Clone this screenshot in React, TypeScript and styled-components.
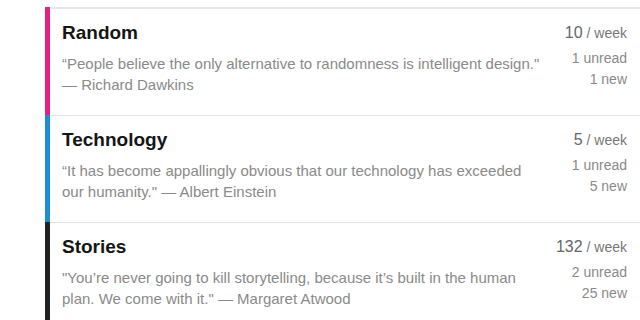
import React from 'react';
import styled, { createGlobalStyle } from 'styled-components';

const GlobalStyle = createGlobalStyle`
  html, body {
    margin: 0;
    padding: 0;
    background: #ffffff;
  }
  body {
    font-family: "Liberation Sans", Arial, Helvetica, sans-serif;
    -webkit-font-smoothing: antialiased;
  }
`;

const Page = styled.div`
  padding: 7px 0 0 45px;
  width: 640px;
  height: 320px;
  box-sizing: border-box;
  overflow: hidden;
`;

const List = styled.div`
  display: flex;
  flex-direction: column;
`;

const Card = styled.div`
  display: flex;
`;

const Stripe = styled.div<{ $color: string }>`
  width: 5px;
  flex-shrink: 0;
  background: ${(p) => p.$color};
`;

const Body = styled.div<{ $first: boolean }>`
  flex: 1;
  display: flex;
  justify-content: space-between;
  align-items: flex-start;
  border-top: ${(p) => (p.$first ? '2px solid #e6e6e6' : '1px solid #e4e4e4')};
  padding: 12px 13px 20px 12px;
`;

const Main = styled.div`
  display: flex;
  flex-direction: column;
  max-width: 478px;
`;

const Title = styled.h2`
  margin: 0;
  font-size: 19px;
  line-height: 24px;
  font-weight: 700;
  color: #151515;
`;

const Quote = styled.p`
  margin: 8px 0 0;
  font-size: 15px;
  line-height: 21px;
  color: #8a8a8a;
`;

const Stats = styled.div`
  display: flex;
  flex-direction: column;
  align-items: flex-end;
  text-align: right;
  white-space: nowrap;
`;

const Rate = styled.div`
  line-height: 24px;
  color: #777;
  font-size: 14px;
`;

const RateNumber = styled.span`
  font-size: 16px;
  color: #666;
`;

const Count = styled.div<{ $gap?: number }>`
  margin-top: ${(p) => p.$gap ?? 0}px;
  font-size: 14px;
  line-height: 21px;
  color: #8a8a8a;
`;

interface Feed {
  title: string;
  color: string;
  quote: string;
  perWeek: number;
  unread: number;
  fresh: number;
}

const feeds: Feed[] = [
  {
    title: 'Random',
    color: '#e91f7d',
    quote:
      '\u201CPeople believe the only alternative to randomness is intelligent design." \u2014 Richard Dawkins',
    perWeek: 10,
    unread: 1,
    fresh: 1,
  },
  {
    title: 'Technology',
    color: '#1a8fd5',
    quote:
      '\u201CIt has become appallingly obvious that our technology has exceeded our humanity." \u2014 Albert Einstein',
    perWeek: 5,
    unread: 1,
    fresh: 5,
  },
  {
    title: 'Stories',
    color: '#222222',
    quote:
      '"You\u2019re never going to kill storytelling, because it\u2019s built in the human plan. We come with it." \u2014 Margaret Atwood',
    perWeek: 132,
    unread: 2,
    fresh: 25,
  },
];

const App: React.FC = (): JSX.Element => {
  return (
    <Page>
      <GlobalStyle />
      <List>
        {feeds.map((feed, i) => (
          <Card key={feed.title}>
            <Stripe $color={feed.color} />
            <Body $first={i === 0}>
              <Main>
                <Title>{feed.title}</Title>
                <Quote>{feed.quote}</Quote>
              </Main>
              <Stats>
                <Rate>
                  <RateNumber>{feed.perWeek}</RateNumber> / week
                </Rate>
                <Count $gap={3}>{feed.unread} unread</Count>
                <Count>{feed.fresh} new</Count>
              </Stats>
            </Body>
          </Card>
        ))}
      </List>
    </Page>
  );
};

export default App;
